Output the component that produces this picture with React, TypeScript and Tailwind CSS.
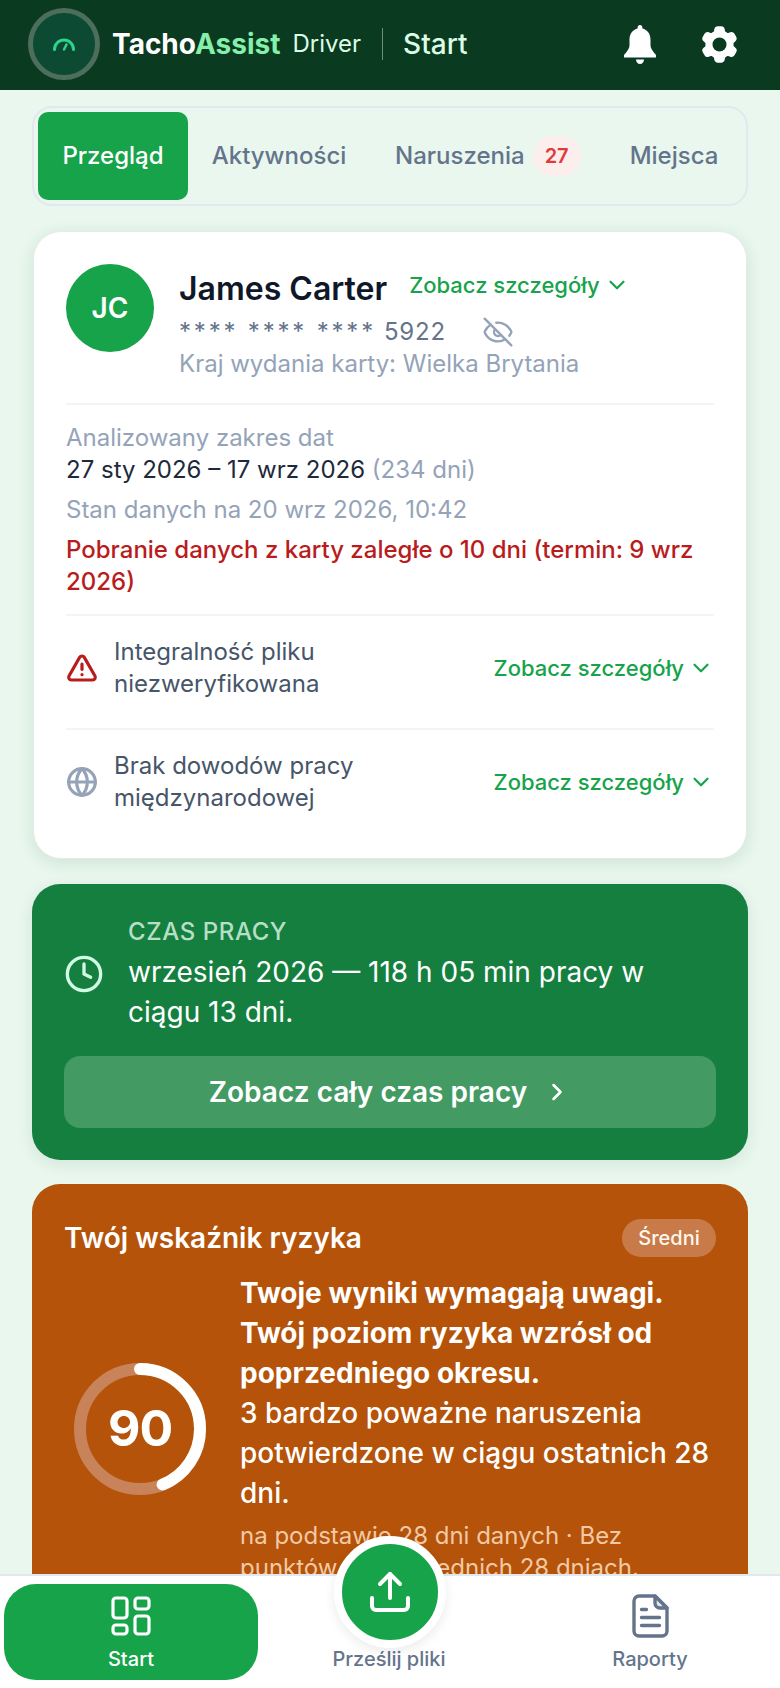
import React from "react";
import { ChevronDown, ChevronRight, EyeOff, TriangleAlert, Globe, Clock, Upload } from "lucide-react";
import { HiCog6Tooth } from "react-icons/hi2";

function Details({ className = "" }: { className?: string }) {
  return (
    <div className={`flex items-center gap-[4px] text-[#16a34a] font-medium text-[22px] leading-[28px] whitespace-nowrap ${className}`}>
      <span>Zobacz szczegóły</span>
      <ChevronDown size={26} strokeWidth={2} />
    </div>
  );
}

function Tabs() {
  return (
    <div className="mx-[32px] mt-4 h-[100px] rounded-[20px] border-2 border-[#e2e8f0] bg-[#e9f7ee] p-[4px] flex items-stretch text-[24px] font-medium text-[#64748b] overflow-hidden">
      <div className="w-[150px] rounded-[10px] bg-[#16a34a] text-white flex items-center justify-center shrink-0">Przegląd</div>
      <div className="w-[182px] flex items-center justify-center shrink-0">Aktywności</div>
      <div className="flex items-center pl-[25px] shrink-0">
        <span>Naruszenia</span>
        <span className="ml-2 w-[48px] h-[40px] rounded-full bg-[#fdeeee] text-[#e03a3a] text-[20px] font-semibold flex items-center justify-center">27</span>
      </div>
      <div className="flex items-center pl-[49px] shrink-0">Miejsca</div>
    </div>
  );
}

function InfoRow({ icon, lines }: { icon: React.ReactNode; lines: string[] }) {
  return (
    <div className="flex items-center border-t-2 border-[#f1f5f9] pt-[20px] pb-[28px]">
      <div className="w-[32px] mr-[16px] flex justify-center shrink-0">{icon}</div>
      <div className="flex-1 text-[24px] leading-[32px] text-[#475569]">
        {lines.map((l) => (
          <div key={l}>{l}</div>
        ))}
      </div>
      <Details />
    </div>
  );
}

function DriverCard() {
  return (
    <div className="mx-[33px] mt-[25px] rounded-[28px] bg-white px-[32px] pt-[32px] pb-[16px] border border-[#e5ece8] shadow-[0_4px_16px_rgba(20,83,45,0.12)]">
      <div className="flex">
        <div className="w-[88px] h-[88px] rounded-full bg-[#16a34a] text-white font-semibold text-[28px] flex items-center justify-center shrink-0">JC</div>
        <div className="ml-[25px] flex-1">
          <div className="flex items-center h-[50px]">
            <span className="text-[32px] font-semibold text-[#0f172a] leading-[48px]">James Carter</span>
            <Details className="ml-[22px] -mt-[8px]" />
          </div>
          <div className="flex items-center h-[34px] pt-[2px] text-[24px] text-[#64748b]">
            <span className="tracking-[2.800px]">**** **** ****</span>
            <span className="ml-[8px] tracking-[0.800px]">5922</span>
            <EyeOff size={32} strokeWidth={1.75} className="ml-[36px] text-[#94a3b8]" />
          </div>
          <div className="text-[24px] leading-[32px] text-[#94a3b8]">Kraj wydania karty: Wielka Brytania</div>
        </div>
      </div>
      <div className="mt-[23px] border-t-2 border-[#f1f5f9] pt-[17px] pb-[16px] text-[24px] leading-[32px]">
        <div className="text-[#94a3b8]">Analizowany zakres dat</div>
        <div className="text-[#1e293b]">
          27 sty 2026 – 17 wrz 2026 <span className="text-[#94a3b8]">(234 dni)</span>
        </div>
        <div className="mt-[8px] text-[#94a3b8]">Stan danych na 20 wrz 2026, 10:42</div>
        <div className="mt-[8px] text-[#b91c1c] font-medium">Pobranie danych z karty zaległe o 10 dni (termin: 9 wrz 2026)</div>
      </div>
      <InfoRow icon={<TriangleAlert size={32} strokeWidth={2.400} className="text-[#b91c1c]" />} lines={["Integralność pliku", "niezweryfikowana"]} />
      <InfoRow icon={<Globe size={32} strokeWidth={2.400} className="text-[#94a3b8]" />} lines={["Brak dowodów pracy", "międzynarodowej"]} />
    </div>
  );
}

function WorkCard() {
  return (
    <div className="mx-[32px] mt-[25px] rounded-[28px] bg-[#157f3f] p-[32px] shadow-[0_4px_16px_rgba(20,83,45,0.1)]">
      <div className="flex items-center">
        <Clock size={40} strokeWidth={2} className="text-[#d1fae5] shrink-0 mr-[24px]" />
        <div>
          <div className="text-[24px] leading-[32px] font-medium tracking-[0.600px] text-[#b7dfc5]">CZAS PRACY</div>
          <div className="mt-[4px] text-[28px] leading-[40px] text-white">wrzesień 2026 — 118 h 05 min pracy w ciągu 13 dni.</div>
        </div>
      </div>
      <div className="mt-[24px] h-[72px] rounded-[16px] bg-[#439a63] flex items-center justify-center gap-[16px] text-white text-[28px] font-semibold">
        <span>Zobacz cały czas pracy</span>
        <ChevronRight size={28} strokeWidth={2.200} />
      </div>
    </div>
  );
}

function RiskCard() {
  return (
    <div className="mx-[32px] mt-[24px] rounded-t-[28px] bg-[#b45309] px-[32px] pt-[33px] pb-[40px]">
      <div className="flex items-center justify-between">
        <div className="text-[28px] font-semibold text-white">Twój wskaźnik ryzyka</div>
        <div className="w-[94px] h-[38px] rounded-full bg-[#c87b48] text-[#fff7ed] text-[20px] font-medium flex items-center justify-center">Średni</div>
      </div>
      <div className="flex items-center mt-[14px]">
        <div className="relative w-[132px] h-[132px] ml-[10px] shrink-0">
          <svg viewBox="0 0 132 132" className="w-full h-full -rotate-90">
            <circle cx="66" cy="66" r="60" fill="none" stroke="#c9835a" strokeWidth="12" />
            <circle cx="66" cy="66" r="60" fill="none" stroke="#fff" strokeWidth="12" strokeLinecap="round" strokeDasharray="165 377" />
          </svg>
          <div className="absolute inset-0 flex items-center justify-center text-[50px] font-bold text-white tracking-[-1px]">90</div>
        </div>
        <div className="ml-[34px] text-[28px] leading-[40px] text-white">
          <div className="font-bold">Twoje wyniki wymagają uwagi. Twój poziom ryzyka wzrósł od poprzedniego okresu.</div>
          <div className="font-medium">3 bardzo poważne naruszenia potwierdzone w ciągu ostatnich 28 dni.</div>
          <div className="mt-[7px] text-[24px] leading-[32px] text-[#f3c9a5]">na podstawie 28 dni danych · Bez punktów w poprzednich 28 dniach.</div>
        </div>
      </div>
    </div>
  );
}

function GridIcon() {
  return (
    <svg width="40" height="40" viewBox="0 0 40 40" fill="none" stroke="currentColor" strokeWidth="3.200" strokeLinejoin="round">
      <rect x="2" y="2" width="14" height="20" rx="3" />
      <rect x="24" y="2" width="14" height="11" rx="3" />
      <rect x="24" y="20" width="14" height="18" rx="3" />
      <rect x="2" y="29" width="14" height="9" rx="3" />
    </svg>
  );
}

function DocIcon() {
  return (
    <svg width="37" height="44" viewBox="0 0 37 44" fill="none" stroke="currentColor" strokeWidth="3.400" strokeLinecap="round" strokeLinejoin="round">
      <path d="M7 2h16l12 12v23a5 5 0 0 1-5 5H7a5 5 0 0 1-5-5V7a5 5 0 0 1 5-5z" />
      <path d="M23 2v7a5 5 0 0 0 5 5h7z" fill="#e2e8f0" />
      <path d="M9.500 15.500h5M9.500 23.500h18M9.500 31.500h18" />
    </svg>
  );
}

function BottomNav() {
  return (
    <div className="relative z-10 h-[114px] bg-white border-t-2 border-[#e2e8f0] shrink-0 flex text-[20px] font-medium">
      <div className="ml-[4px] mt-[8px] w-[254px] h-[96px] rounded-[32px] bg-[#16a34a] text-white flex flex-col items-center pt-[12px]">
        <GridIcon />
        <span className="leading-[26px] mt-[10px]">Start</span>
      </div>
      <div className="flex-1 flex flex-col items-center justify-end pb-[16px] text-[#64748b] leading-[26px]">Prześlij pliki</div>
      <div className="w-[260px] flex flex-col items-center text-[#64748b] pt-[18px]">
        <DocIcon />
        <span className="leading-[26px] mt-[8px]">Raporty</span>
      </div>
      <div className="absolute left-[334px] -top-[40px] w-[112px] h-[112px] rounded-full bg-[#16a34a] border-[8px] border-white shadow-[0_4px_12px_rgba(0,0,0,0.08)] flex items-center justify-center text-white">
        <Upload size={48} strokeWidth={2} />
      </div>
    </div>
  );
}

export default function App() {
  return (
    <div className="w-[780px] h-[1688px] flex flex-col overflow-hidden bg-[#e9f7ee] font-['Inter',sans-serif]">
      <header className="h-[90px] shrink-0 bg-[#0a3a1f] flex items-center pl-[28px] pr-[38px] pb-[2px] text-white">
        <div className="w-[72px] h-[72px] rounded-full bg-[#0c4a33] border-[5px] border-[#4d6e5b] flex items-center justify-center shrink-0">
          <svg width="24" height="16" viewBox="0 0 24 16" fill="none" stroke="#2dd48c" strokeWidth="3" strokeLinecap="round">
            <path d="M2.500 13.500a9.500 9.500 0 0 1 19 0" />
            <path d="M12 13.500l2.500-5" strokeWidth="2.500" />
          </svg>
        </div>
        <div className="ml-[12px] text-[28px] font-bold">
          Tacho<span className="text-[#86efac]">Assist</span>
        </div>
        <div className="ml-[12px] text-[24px] text-[#dcfce7]">Driver</div>
        <div className="ml-[21px] w-[1px] h-[32px] bg-[#6b8f7a]" />
        <div className="ml-[20px] text-[28px] font-medium text-[#dcfce7]">Start</div>
        <svg width="32" height="39" viewBox="0 0 32 39" fill="#fff" className="ml-auto">
          <path d="M16 0c-1.400 0-2.400 1-2.400 2.400v1.200C8.800 4.800 5.500 9 5.500 14.500v6c0 3-2.500 6-5.500 9.500v2.500h32V30c-3-3.500-5.500-6.500-5.500-9.500v-6c0-5.500-3.300-9.700-8.100-10.900V2.400C18.400 1 17.400 0 16 0z" />
          <path d="M12 34.500h8c0 2.500-1.800 4.500-4 4.500s-4-2-4-4.500z" />
        </svg>
        <HiCog6Tooth size={45} className="ml-[41px] text-white" />
      </header>
      <main className="flex-1 overflow-hidden">
        <Tabs />
        <DriverCard />
        <WorkCard />
        <RiskCard />
      </main>
      <BottomNav />
    </div>
  );
}
